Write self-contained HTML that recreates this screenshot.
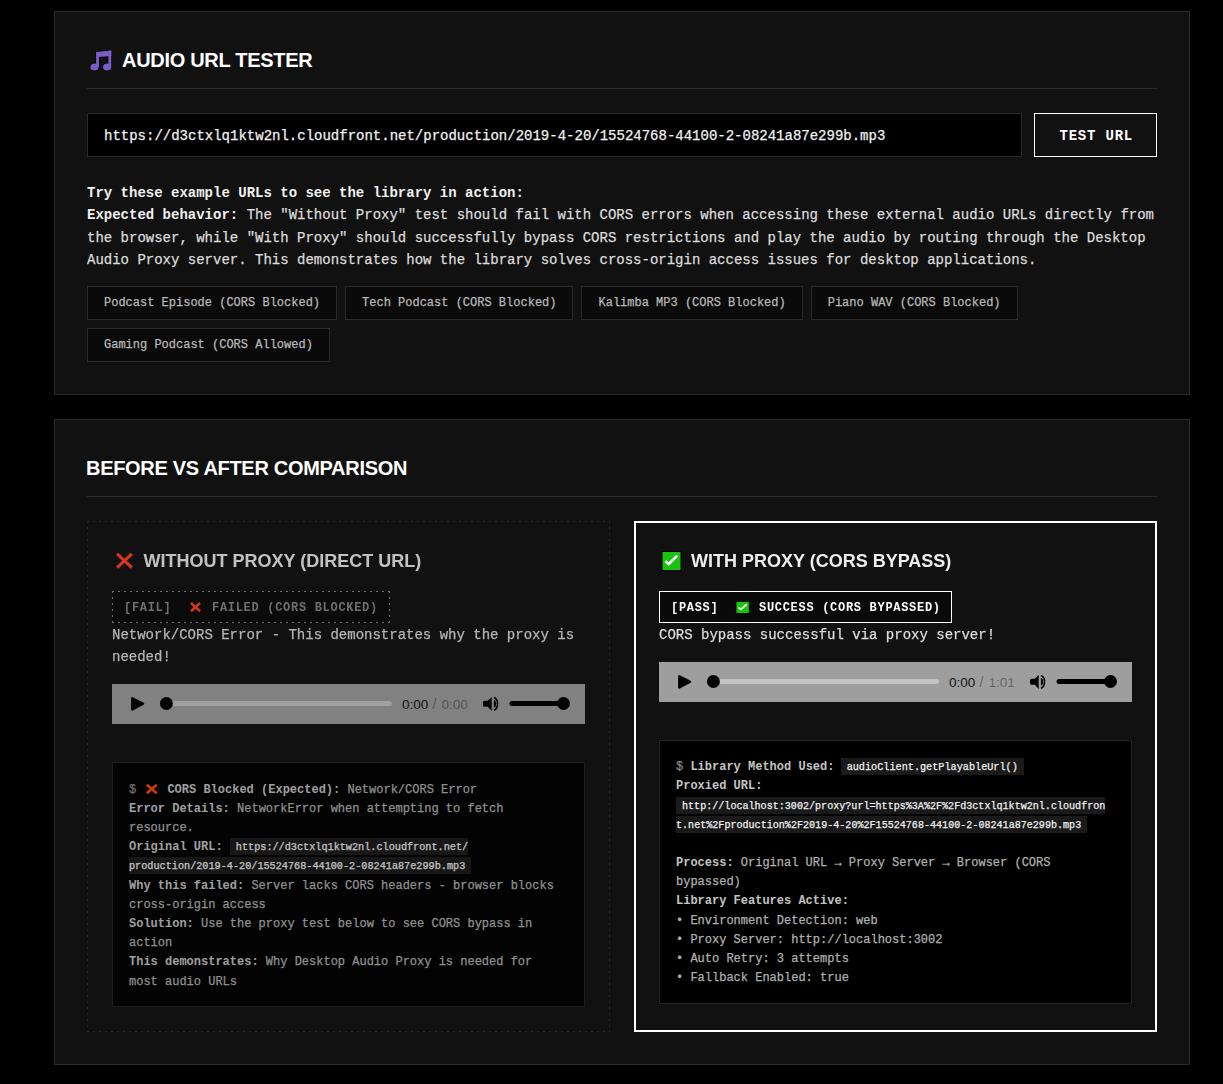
<!DOCTYPE html>
<html><head><meta charset="utf-8">
<style>
*{box-sizing:border-box;margin:0;padding:0}
html,body{width:1223px;height:1084px;overflow:hidden;background:#000}
body{position:relative;font-family:"Liberation Mono",monospace;color:#e6e6e6}
.desc,.input span,.ex,.msg,.code{-webkit-text-stroke:0.25px currentColor}
.desc b,.code b{-webkit-text-stroke:0}
.abs{position:absolute}
.panel{position:absolute;left:54px;width:1136px;background:#111;border:1px solid #2a2a2a}
.p1{top:11px;height:384px}
.p2{top:419px;height:646px}
.title{position:absolute;font-family:"Liberation Sans",sans-serif;font-weight:bold;font-size:20px;color:#fff;letter-spacing:-0.3px;white-space:nowrap;line-height:20px}
.divider{position:absolute;left:32px;width:1070px;height:1px;background:#2a2a2a}
.input{position:absolute;left:32px;top:101px;width:935px;height:44px;background:#000;border:1px solid #2a2a2a}
.input span{position:absolute;left:16px;top:14px;font-size:14px;line-height:16px;color:#f2f2f2;white-space:nowrap}
.btn{position:absolute;left:979px;top:101px;width:123px;height:44px;border:1px solid #fff;background:#111;color:#fff;font-weight:bold;font-size:14px;letter-spacing:0.8px;text-indent:1.5px;text-align:center;line-height:44px}
.desc{position:absolute;left:32px;top:170px;font-size:14px;line-height:22.4px;color:#dcdcdc;white-space:nowrap}
.desc b{color:#f0f0f0}
.exs{position:absolute;left:32px;top:274px;width:1070px;display:flex;flex-wrap:wrap;gap:8px}
.ex{height:34px;background:#0a0a0a;border:1px solid #2a2a2a;color:#b9b9b9;font-size:12px;line-height:33px;padding:0 16px;white-space:nowrap}
.col{position:absolute;top:101px;width:523px;height:511px}
.colL{left:32px;border:1px dashed #363636}
.colR{left:579px;border:2px solid #fff}
.h3{position:absolute;font-family:"Liberation Sans",sans-serif;font-weight:bold;font-size:18px;line-height:18px;white-space:nowrap}
.badge{position:absolute;height:32px;font-size:12px;line-height:30px;letter-spacing:0.6px;white-space:nowrap}
.msg{position:absolute;font-size:14px;line-height:22.4px;white-space:nowrap}
.player{position:absolute;width:473px;height:40px}
.code{position:absolute;width:473px;background:#000;border:1px solid #222;padding:15px 16px;font-size:12px;line-height:19.2px;white-space:nowrap}
.code b{font-weight:bold}


.pg{position:absolute;white-space:nowrap}
.L{position:absolute;left:0;top:0;width:1223px;height:1084px;opacity:0.8}
.h3{position:absolute;font-family:"Liberation Sans",sans-serif;font-weight:bold;font-size:18px;line-height:18px;white-space:nowrap;color:#eee}
.bt{position:absolute;font-size:12px;line-height:12px;letter-spacing:0.7px;white-space:nowrap}
.msg{position:absolute;font-size:14px;line-height:22.4px;white-space:nowrap;color:#ddd}
.code{position:absolute;width:473px;background:#000;border:1px solid #222;padding:17px 16px 0;font-size:12px;line-height:19.2px;white-space:nowrap;color:#b0b0b0}
.code b{font-weight:bold;color:#c4c4c4}
.code .d{color:#888}
.ic{background:#1a1a1a;color:#f0f0f0;font-size:10.08px;padding:4px 6px 2px}
.ic1{padding-right:0;position:relative;top:1px}
.ic2{padding-left:0}
.emo{display:inline-block;width:16.8px;height:12px;vertical-align:middle}

.dash{background-image:repeating-linear-gradient(90deg,var(--c) 0 2px,transparent 2px 6px),repeating-linear-gradient(90deg,var(--c) 0 2px,transparent 2px 6px),repeating-linear-gradient(180deg,var(--c) 0 2px,transparent 2px 6px),repeating-linear-gradient(180deg,var(--c) 0 2px,transparent 2px 6px);background-size:100% 1px,100% 1px,1px 100%,1px 100%;background-position:0 0,0 100%,0 0,100% 0;background-repeat:no-repeat}
</style></head><body>

<!-- PANEL 1 -->
<div class="panel p1">
  <svg class="abs" style="left:32px;top:35px" width="30" height="28" viewBox="0 0 30 28">
  </svg>
  <div class="title" style="left:67px;top:38px">AUDIO URL TESTER</div>
  <div class="divider" style="top:76px"></div>
  <div class="input"><span>https://d3ctxlq1ktw2nl.cloudfront.net/production/2019-4-20/15524768-44100-2-08241a87e299b.mp3</span></div>
  <div class="btn">TEST URL</div>
  <div class="desc"><b>Try these example URLs to see the library in action:</b><br><b>Expected behavior:</b> The "Without Proxy" test should fail with CORS errors when accessing these external audio URLs directly from<br>the browser, while "With Proxy" should successfully bypass CORS restrictions and play the audio by routing through the Desktop<br>Audio Proxy server. This demonstrates how the library solves cross-origin access issues for desktop applications.</div>
  <div class="exs"><div class="ex">Podcast Episode (CORS Blocked)</div><div class="ex">Tech Podcast (CORS Blocked)</div><div class="ex">Kalimba MP3 (CORS Blocked)</div><div class="ex">Piano WAV (CORS Blocked)</div><div class="ex">Gaming Podcast (CORS Allowed)</div></div>
</div>

<!-- PANEL 2 -->
<div class="panel p2">
  <div class="title" style="left:31px;top:38px">BEFORE VS AFTER COMPARISON</div>
  <div class="divider" style="top:76px"></div>
</div>


<!-- LEFT COLUMN (dimmed) -->
<div class="L">
  <div class="pg dash" style="left:87px;top:521px;width:523px;height:511px;--c:#303030"></div>
  <div class="h3" style="left:143.5px;top:552px">WITHOUT PROXY (DIRECT URL)</div>
  <div class="pg dash" style="left:112px;top:591px;width:278px;height:32px;--c:#888;background-color:#0a0a0a"></div>
  <div class="bt" style="left:124px;top:602px;color:#888;font-weight:bold">[FAIL]</div>
  <div class="bt" style="left:212px;top:602px;color:#888;font-weight:bold">FAILED (CORS BLOCKED)</div>
  <div class="msg" style="left:112px;top:623.7px">Network/CORS Error - This demonstrates why the proxy is<br>needed!</div>
  <svg class="pg" style="left:112px;top:684px" width="473" height="40" viewBox="0 0 473 40">
<rect width="473" height="40" fill="#9e9e9e"/>
<path d="M20.3,14.3 L31.1,19.8 L20.3,25.5 Z" fill="#000" stroke="#000" stroke-width="2.4" stroke-linejoin="round"/>
<rect x="54" y="17" width="226" height="5" rx="2.5" fill="#c4c4c4"/>
<circle cx="54.4" cy="19.5" r="6.5" fill="#000"/>
<text x="290" y="24.6" font-family="Liberation Sans" font-size="13.5" fill="#111">0:00</text>
<text x="320.5" y="24.6" font-family="Liberation Sans" font-size="14" fill="#666">/</text><text x="329.5" y="24.6" font-family="Liberation Sans" font-size="13.5" fill="#666">0:00</text>
<path d="M372.5,16.8 H375.8 L379.7,12.9 V26.9 L375.8,22.7 H372.5 A1.5,1.5 0 0 1 371,21.2 V18.3 A1.5,1.5 0 0 1 372.5,16.8 Z" fill="#000"/>
<path d="M381.9,16 A2.1,3.85 0 0 1 381.9,23.7 Z" fill="#000"/>
<path d="M382,13.6 A5,6.6 0 0 1 382,26.2" stroke="#000" stroke-width="1.6" fill="none"/>
<line x1="400" y1="19.5" x2="451.5" y2="19.5" stroke="#000" stroke-width="5" stroke-linecap="round"/>
<circle cx="451.5" cy="19.5" r="6.5" fill="#000"/>
</svg>
  <div class="code" style="left:112px;top:762px;height:245px;padding-top:17.6px"><span class="d">$</span> <span class="emo"></span> <b>CORS Blocked (Expected):</b> Network/CORS Error<br><b>Error Details:</b> NetworkError when attempting to fetch<br>resource.<br><b>Original URL:</b> <span class="ic" style="font-size:10.2px">https://d3ctxlq1ktw2nl.cloudfront.net/<br>production/2019-4-20/15524768-44100-2-08241a87e299b.mp3</span><br><b>Why this failed:</b> Server lacks CORS headers - browser blocks<br>cross-origin access<br><b>Solution:</b> Use the proxy test below to see CORS bypass in<br>action<br><b>This demonstrates:</b> Why Desktop Audio Proxy is needed for<br>most audio URLs</div>
</div>

<!-- RIGHT COLUMN -->
<div class="pg" style="left:634px;top:521px;width:523px;height:511px;border:2px solid #fff"></div>
<div class="h3" style="left:691px;top:552px">WITH PROXY (CORS BYPASS)</div>
<div class="pg" style="left:659px;top:591px;width:293px;height:32px;border:1px solid #fff;background:#0a0a0a"></div>
<div class="bt" style="left:671px;top:602px;color:#fff;font-weight:bold">[PASS]</div>
<div class="bt" style="left:759px;top:602px;color:#fff;font-weight:bold">SUCCESS (CORS BYPASSED)</div>
<div class="msg" style="left:659px;top:623.7px">CORS bypass successful via proxy server!</div>
<svg class="pg" style="left:659px;top:662px" width="473" height="40" viewBox="0 0 473 40">
<rect width="473" height="40" fill="#9e9e9e"/>
<path d="M20.3,14.3 L31.1,19.8 L20.3,25.5 Z" fill="#000" stroke="#000" stroke-width="2.4" stroke-linejoin="round"/>
<rect x="54" y="17" width="226" height="5" rx="2.5" fill="#c4c4c4"/>
<circle cx="54.4" cy="19.5" r="6.5" fill="#000"/>
<text x="290" y="24.6" font-family="Liberation Sans" font-size="13.5" fill="#111">0:00</text>
<text x="320.5" y="24.6" font-family="Liberation Sans" font-size="14" fill="#666">/</text><text x="329.5" y="24.6" font-family="Liberation Sans" font-size="13.5" fill="#666">1:01</text>
<path d="M372.5,16.8 H375.8 L379.7,12.9 V26.9 L375.8,22.7 H372.5 A1.5,1.5 0 0 1 371,21.2 V18.3 A1.5,1.5 0 0 1 372.5,16.8 Z" fill="#000"/>
<path d="M381.9,16 A2.1,3.85 0 0 1 381.9,23.7 Z" fill="#000"/>
<path d="M382,13.6 A5,6.6 0 0 1 382,26.2" stroke="#000" stroke-width="1.6" fill="none"/>
<line x1="400" y1="19.5" x2="451.5" y2="19.5" stroke="#000" stroke-width="5" stroke-linecap="round"/>
<circle cx="451.5" cy="19.5" r="6.5" fill="#000"/>
</svg>
<div class="code" style="left:659px;top:740px;height:264px"><span class="d">$</span> <b>Library Method Used:</b> <span class="ic" style="font-size:10.2px;margin-left:-1px">audioClient.getPlayableUrl()</span><br><b>Proxied URL:</b><br><span class="ic ic1">http://localhost:3002/proxy?url=https%3A%2F%2Fd3ctxlq1ktw2nl.cloudfron</span><br><span class="ic ic2">t.net%2Fproduction%2F2019-4-20%2F15524768-44100-2-08241a87e299b.mp3</span><br><br><b>Process:</b> Original URL → Proxy Server → Browser (CORS<br>bypassed)<br><b>Library Features Active:</b><br>• Environment Detection: web<br>• Proxy Server: http://localhost:3002<br>• Auto Retry: 3 attempts<br>• Fallback Enabled: true</div>

<!-- ICONS OVERLAY -->
<svg class="pg" style="left:0;top:0" width="1223" height="1084" viewBox="0 0 1223 1084">
  <!-- music note -->
  <g transform="translate(0.3,0.7)">
  <g stroke="#000" stroke-width="1.4" fill="#000">
    <path d="M95.8,51.3 L111,49.8 L111,55.2 L98.7,56.4 Z"/>
    <rect x="95.8" y="51.5" width="2.9" height="15"/>
    <rect x="108.1" y="50" width="2.9" height="16.5"/>
    <ellipse cx="94.2" cy="66.3" rx="4.1" ry="3.6"/>
    <ellipse cx="106.8" cy="66.3" rx="4.1" ry="3.6"/>
  </g>
  <g fill="#7a5cc8">
    <path d="M95.8,51.3 L111,49.8 L111,55.2 L98.7,56.4 Z"/>
    <rect x="95.8" y="51.5" width="2.9" height="15"/>
    <rect x="108.1" y="50" width="2.9" height="16.5"/>
    <ellipse cx="94.2" cy="66.3" rx="4.1" ry="3.6"/>
    <ellipse cx="106.8" cy="66.3" rx="4.1" ry="3.6"/>
  </g>
  </g>
  <!-- red X big -->
  <path d="M117.1,553.9 L131.8,567.7 M131.8,553.9 L117.1,567.7" stroke="#d6381b" stroke-width="3.1"/>
  <!-- green check big -->
  <rect x="662" y="551.5" width="19" height="19" fill="#1ac30f" stroke="#000" stroke-width="1"/>
  <path d="M665.4,561.3 L668.7,564 L677.3,555.7" stroke="#fff" stroke-width="2.5" fill="none"/>
  <!-- small X in FAIL badge -->
  <path d="M190.9,603 L200.1,611.3 M200.1,603 L190.9,611.3" stroke="#d0361a" stroke-width="2.6"/>
  <!-- small check in PASS badge -->
  <rect x="736" y="601.5" width="13.2" height="11.9" fill="#1ac30f" stroke="#000" stroke-width="0.8"/>
  <path d="M738.6,607.4 L740.9,609.4 L746.8,604.3" stroke="#fff" stroke-width="1.8" fill="none"/>
  <!-- small X in code box -->
  <path d="M146.8,784.8 L156.7,793.2 M156.7,784.8 L146.8,793.2" stroke="#d0361a" stroke-width="2.6"/>
</svg>

</body></html>
